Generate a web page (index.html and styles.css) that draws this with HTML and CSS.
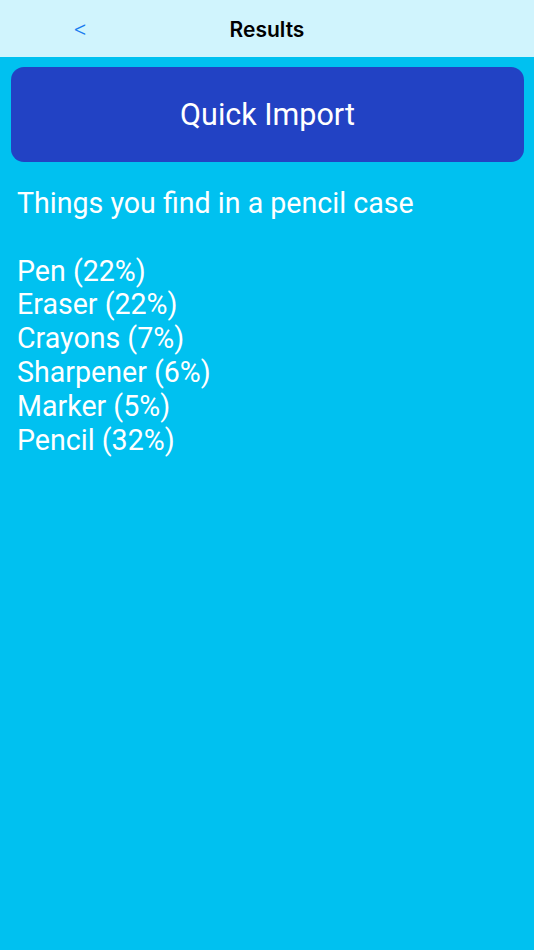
FILE: index.html
```html
<!DOCTYPE html>
<html lang="en">
<head>
  <meta charset="UTF-8">
  <meta name="viewport" content="width=device-width, initial-scale=1.0">
  <title>Results</title>
  <link rel="stylesheet" href="styles.css">
</head>
<body>
  <div class="navbar">
    <button class="back">&lt;</button>
    <div class="title">Results</div>
  </div>
  <div class="content">
    <button class="import">Quick Import</button>
    <div class="results">
      <div class="line">Things you find in a pencil case</div>
      <div class="line blank"></div>
      <div class="line">Pen (22%)</div>
      <div class="line">Eraser (22%)</div>
      <div class="line">Crayons (7%)</div>
      <div class="line">Sharpener (6%)</div>
      <div class="line">Marker (5%)</div>
      <div class="line">Pencil (32%)</div>
    </div>
  </div>
</body>
</html>
```

FILE: styles.css
```css
body {
  margin: 0;
  height: 950px;
  background-color: #00c1f0;
  font-family: Roboto, "Noto Sans", sans-serif;
  color: #fff;
}
.navbar {
  height: 57px;
  background-color: #d0f4fd;
  display: flex;
  align-items: center;
  justify-content: center;
  position: relative;
}
.back {
  position: absolute;
  left: 70px;
  top: 15px;
  background: none;
  border: none;
  color: #1a7cf0;
  font-family: Roboto, sans-serif;
  font-size: 25px;
  font-weight: 300;
  padding: 0 4px;
}
.title {
  color: #000;
  font-family: Inter, sans-serif;
  font-size: 21px;
  font-weight: 600;
  margin-top: 1px;
}
.content {
  padding: 10px 10px 0 11px;
}
.import {
  display: block;
  width: 513px;
  height: 95px;
  background-color: #2242c4;
  border: none;
  border-radius: 13px;
  color: #fff;
  font-family: Roboto, sans-serif;
  font-size: 30.5px;
  padding: 0;
}
.results {
  padding: 25px 6px;
  font-size: 28.6px;
  line-height: 33.8px;
}
.blank {
  height: 33.8px;
}
```
